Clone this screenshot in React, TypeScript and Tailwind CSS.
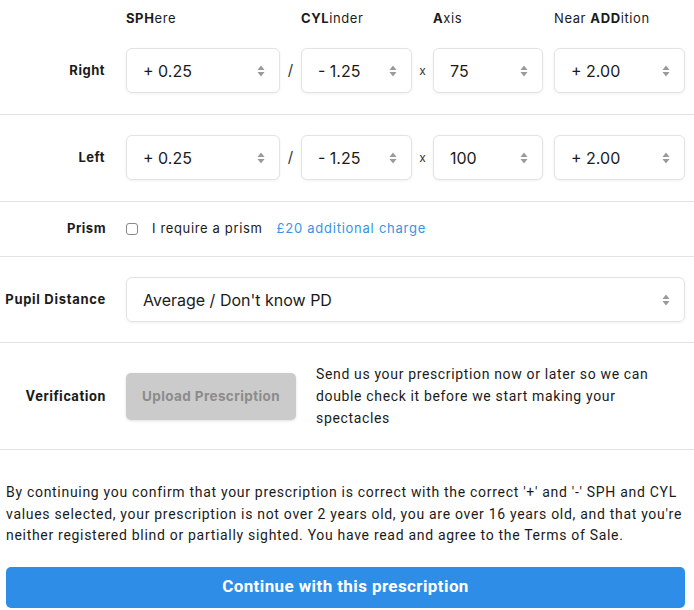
import React from 'react';

const inter = 'font-["Inter",sans-serif]';
const roboto = 'font-["Roboto",sans-serif]';

function Arrows() {
    return (
        <svg width="8" height="12" viewBox="0 0 8 12" className="shrink-0">
            <path d="M4 0.5 L7.5 5 L0.5 5 Z" fill="#9a9a9a" />
            <path d="M4 11.5 L7.5 7 L0.5 7 Z" fill="#9a9a9a" />
        </svg>
    );
}

function Field({ value, width }: { value: string; width: string }) {
    return (
        <div
            className={`${width} h-[45px] shrink-0 flex items-center justify-between pl-4 pr-[14px] bg-white border border-[#e3e3e3] rounded-[6px] shadow-[0_1px_3px_rgba(0,0,0,0.06)]`}
        >
            <span className={`${inter} text-[16px] text-[#1b1b1b]`}>{value}</span>
            <Arrows />
        </div>
    );
}

function Sep({ children }: { children?: React.ReactNode }) {
    return (
        <div className={`shrink-0 flex items-center justify-center ${inter} text-[#333]`}>
            {children}
        </div>
    );
}

function RxRow({ label, values }: { label: string; values: string[] }) {
    return (
        <div className="flex items-center">
            <div className={`w-[106px] shrink-0 text-right pr-[1px] ${inter} text-[13px] tracking-[0.5px] font-bold text-[#1b1b1b]`}>
                {label}
            </div>
            <div className="pl-5 flex items-center">
                <Field value={values[0]} width="w-[154px]" />
                <Sep><span className="w-[21px] text-center text-[15px]">/</span></Sep>
                <Field value={values[1]} width="w-[111px]" />
                <Sep><span className="w-[21px] text-center text-[12px]">x</span></Sep>
                <Field value={values[2]} width="w-[110px]" />
                <div className="w-[11px]" />
                <Field value={values[3]} width="w-[131px]" />
            </div>
        </div>
    );
}

export default function App() {
    return (
        <div className="w-[694px] h-[610px] bg-white overflow-hidden">
            {/* Right eye + column headings */}
            <div className="pt-2 pb-[21px] border-b border-[#e2e2e2]">
                <div className={`h-[22px] flex items-center pl-[126px] ${inter} text-[13px] tracking-[0.6px] text-[#1b1b1b]`}>
                    <span className="w-[175px]"><b>SPH</b>ere</span>
                    <span className="w-[132px]"><b>CYL</b>inder</span>
                    <span className="w-[121px]"><b>A</b>xis</span>
                    <span>Near <b>ADD</b>ition</span>
                </div>
                <div className="mt-[18px]">
                    <RxRow label="Right" values={['+ 0.25', '- 1.25', '75', '+ 2.00']} />
                </div>
            </div>

            {/* Left eye */}
            <div className="pt-5 pb-[21px] border-b border-[#e2e2e2]">
                <RxRow label="Left" values={['+ 0.25', '- 1.25', '100', '+ 2.00']} />
            </div>

            {/* Prism */}
            <div className="h-[55px] flex items-center border-b border-[#e2e2e2]">
                <div className={`w-[106px] text-right ${inter} text-[13px] tracking-[0.5px] font-bold text-[#1b1b1b]`}>Prism</div>
                <div className="pl-5 flex items-center">
                    <span className="w-[12px] h-[12px] rounded-[3px] border border-[#8a8a8a] bg-white" />
                    <span className={`ml-[14px] ${inter} text-[13px] tracking-[0.65px] text-[#1b1b1b]`}>I require a prism</span>
                    <span className={`ml-[14px] ${inter} text-[13px] tracking-[0.75px] text-[#3a93e4]`}>£20 additional charge</span>
                </div>
            </div>

            {/* Pupil distance */}
            <div className="py-5 flex items-center border-b border-[#e2e2e2]">
                <div className={`w-[106px] text-right ${inter} text-[13px] tracking-[0.7px] font-bold text-[#1b1b1b]`}>Pupil Distance</div>
                <div className="pl-5">
                    <div className="w-[559px] h-[45px] flex items-center justify-between pl-4 pr-[14px] border border-[#e3e3e3] rounded-[6px] shadow-[0_1px_3px_rgba(0,0,0,0.06)]">
                        <span className={`${inter} text-[16px] text-[#1b1b1b]`}>Average / Don't know PD</span>
                        <Arrows />
                    </div>
                </div>
            </div>

            {/* Verification */}
            <div className="py-5 flex items-center border-b border-[#e2e2e2]">
                <div className={`w-[106px] text-right ${roboto} text-[14px] tracking-[0.6px] font-bold text-[#1b1b1b]`}>Verification</div>
                <div className="pl-5 flex items-center">
                    <button className={`w-[170px] h-[47px] rounded-[5px] bg-[#cbcbcb] shadow-[0_1px_3px_rgba(0,0,0,0.12)] ${inter} text-[13.5px] tracking-[0.4px] font-bold text-[#8c8c8c]`}>
                        Upload Prescription
                    </button>
                    <p className={`ml-5 w-[360px] ${roboto} text-[14px] leading-[22px] tracking-[0.65px] text-[#1b1b1b]`}>
                        Send us your prescription now or later so we can<br />
                        double check it before we start making your<br />
                        spectacles
                    </p>
                </div>
            </div>

            {/* Terms + continue */}
            <div className="pl-[6px] pr-[9px] pt-[32px]">
                <p className={`${roboto} text-[14px] leading-[21.5px] tracking-[0.7px] text-[#1b1b1b] whitespace-nowrap`}>
                    By continuing you confirm that your prescription is correct with the correct '+' and '-' SPH and CYL<br />
                    values selected, your prescription is not over 2 years old, you are over 16 years old, and that you're<br />
                    neither registered blind or partially sighted. You have read and agree to the Terms of Sale.
                </p>
                <button className={`mt-[20px] w-full h-[41px] rounded-[5px] bg-[#2e8de6] ${roboto} text-[17px] tracking-[0.4px] font-bold text-white`}>
                    Continue with this prescription
                </button>
            </div>
        </div>
    );
}
